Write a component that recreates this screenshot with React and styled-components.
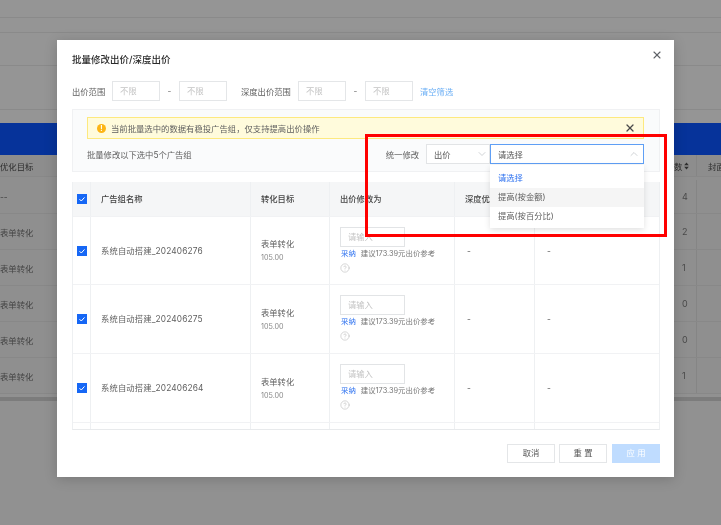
import React from 'react';
import styled, { createGlobalStyle } from 'styled-components';
import { ChevronDown, ChevronUp, X, CircleHelp } from 'lucide-react';

const GlobalStyle = createGlobalStyle`
  html, body {
    margin: 0;
    padding: 0;
    background: #919191;
    font-family: Inter, "Noto Sans CJK SC", sans-serif;
  }
  * {
    box-sizing: border-box;
  }
`;

// the reference is a soft, upscaled capture
const Page = styled.div`
  position: relative;
  width: 721px;
  height: 525px;
  overflow: hidden;
  background: #919191;
  filter: blur(0.3px);
`;

/* dimmed page behind the modal */
const BackTop = styled.div`
  height: 123px;
  background: #959595;
`;

const BackLine = styled.div`
  height: ${(p) => p.$h}px;
  border-bottom: 1px solid #8a8a8a;
`;

const BlueBand = styled.div`
  height: 32px;
  background: #06339a;
`;

const BackRow = styled.div`
  display: grid;
  grid-template-columns: 33px 1fr 24px 24px;
  align-items: center;
  height: ${(p) => p.$h}px;
  padding-top: ${(p) => p.$pt ?? 0}px;
  background: ${(p) => (p.$head ? '#8d8d8d' : '#8f8f8f')};
  border-bottom: 1px solid #888;
  font-size: 8.4px;
  color: ${(p) => (p.$head ? '#2e2e2e' : '#444')};
  white-space: nowrap;
`;

const BackNum = styled.span`
  grid-column: 3;
  display: flex;
  align-items: center;
  align-self: stretch;
  gap: 2px;
  padding-left: ${(p) => p.$pl}px;
  font-size: ${(p) => (p.$num ? 9 : 8.4)}px;
  color: ${(p) => (p.$num ? '#4a4a4a' : 'inherit')};
  border-right: 1px solid #858585;
`;

const BackCover = styled.span`
  padding-left: 11px;
`;

const ScrollBar = styled.div`
  height: 4px;
  margin-top: 3px;
  background: #7c7c7c;
`;

const Overlay = styled.div`
  position: absolute;
  inset: 0;
`;

const Modal = styled.div`
  position: absolute;
  left: 57px;
  top: 40px;
  width: 617px;
  height: 437px;
  background: #fff;
  box-shadow: 0 2px 12px rgba(0, 0, 0, 0.18);
  padding: 14px 14px 14px 15px;
  display: flex;
  flex-direction: column;
`;

const CloseBtn = styled.div`
  position: absolute;
  right: 11px;
  top: 9px;
  color: #5f6368;
  display: flex;
`;

const Title = styled.div`
  font-size: 9.5px;
  line-height: 12px;
  font-weight: 500;
  color: #2b2b2b;
  margin-bottom: 15px;
  white-space: nowrap;
`;

const FilterRow = styled.div`
  display: flex;
  align-items: center;
  height: 20px;
  font-size: 8.3px;
  color: #606060;
  margin-bottom: 8px;
`;

const FilterLabel = styled.span`
  margin-right: ${(p) => p.$gap}px;
  width: ${(p) => p.$w}px;
  white-space: nowrap;
`;

const SmallInput = styled.div`
  width: 48px;
  height: 20px;
  border: 1px solid #e4e6e8;
  font-size: 8.4px;
  line-height: 18px;
  padding-left: 7px;
  color: #c4c4c4;
`;

const Dash = styled.span`
  width: 19px;
  text-align: center;
  color: #777;
`;

const ClearLink = styled.span`
  margin-left: 7px;
  color: #6aaef5;
  white-space: nowrap;
`;

const Spacer = styled.div`
  width: ${(p) => p.$w}px;
`;

const Panel = styled.div`
  height: 63px;
  background: #fafbfc;
  border: 1px solid #f0f1f3;
  padding: 7px 15px 0 14px;
  margin-bottom: 10px;
`;

const Alert = styled.div`
  display: flex;
  align-items: center;
  height: 22px;
  background: #fffbdc;
  border: 1px solid #fde97f;
  padding: 0 7px 0 9px;
  font-size: 8.35px;
  color: #606060;
`;

const AlertIcon = styled.span`
  width: 9px;
  height: 9px;
  border-radius: 50%;
  background: #fdb515;
  color: #fff;
  font-size: 7px;
  font-weight: 700;
  line-height: 9px;
  text-align: center;
  margin-right: 5px;
`;

const AlertText = styled.span`
  flex: 1;
  white-space: nowrap;
`;

const AlertClose = styled.span`
  display: flex;
  color: #4a4a4a;
`;

const PanelRow = styled.div`
  display: flex;
  align-items: center;
  height: 20px;
  margin-top: 5px;
  font-size: 8.3px;
  color: #606060;
`;

const PanelText = styled.span`
  flex: 1;
  white-space: nowrap;
  margin-top: -1px;
`;

const SelectWrap = styled.div`
  position: relative;
  margin-left: ${(p) => p.$ml}px;
`;

const Select = styled.div`
  display: flex;
  align-items: center;
  justify-content: space-between;
  width: ${(p) => p.$w}px;
  height: 20px;
  padding: 0 ${(p) => (p.$open ? 3 : 1)}px 0 7px;
  background: #fff;
  border: 1px solid ${(p) => (p.$open ? '#5f9ff5' : '#e2e4e6')};
  font-size: 8.3px;
  color: #555;
  svg {
    color: #c0c4c8;
  }
`;

const Dropdown = styled.div`
  position: absolute;
  z-index: 2;
  left: 0;
  top: 21px;
  width: 154px;
  padding: 4px 0 2px;
  background: #fff;
  box-shadow: 0 2px 6px rgba(0, 0, 0, 0.12);
`;

const Option = styled.div`
  height: 19px;
  line-height: 19px;
  padding-left: 8px;
  white-space: nowrap;
  background: ${(p) => (p.$hover ? '#f5f5f5' : '#fff')};
  color: ${(p) => (p.$active ? '#2a6ff0' : '#606060')};
`;

const TableBox = styled.div`
  height: 248px;
  overflow: hidden;
  border-bottom: 1px solid #e8eaec;
  border-left: 1px solid #eef0f2;
  border-right: 1px solid #eef0f2;
`;

const Cols = styled.div`
  display: grid;
  grid-template-columns: 18px 160px 79px 125px 80px 1fr;
  height: ${(p) => p.$h}px;
  border-bottom: 1px solid #f1f2f4;
  background: ${(p) => (p.$head ? '#f5f6f7' : '#fff')};
`;

const Cell = styled.div`
  display: flex;
  flex-direction: column;
  justify-content: center;
  align-items: flex-start;
  min-width: 0;
  padding-left: ${(p) => p.$pl ?? 10}px;
  border-right: 1px solid #eef0f2;
  font-size: 8.3px;
  line-height: 12px;
  font-weight: ${(p) => (p.$head ? 500 : 400)};
  color: ${(p) => (p.$head ? '#444' : '#606060')};
  white-space: nowrap;
  &:last-child {
    border-right: none;
  }
`;

const BidCell = styled(Cell)`
  padding-bottom: 2px;
`;

const NameText = styled.span`
  letter-spacing: 0.15px;
`;

const CheckBox = styled.span`
  width: 10px;
  height: 10px;
  background: #1667f5;
  color: #fff;
  display: flex;
  align-items: center;
  justify-content: center;
`;

const Sub = styled.span`
  font-size: 7.2px;
  color: #888;
  line-height: 10px;
  margin-top: 3px;
`;

const BidInput = styled.div`
  width: 65px;
  height: 20px;
  border: 1px solid #e2e4e6;
  line-height: 18px;
  padding-left: 7px;
  color: #c4c4c4;
`;

const Tip = styled.div`
  margin-top: 1px;
  padding-left: 1px;
  font-size: 7.4px;
  line-height: 12px;
  color: #777;
`;

const Adopt = styled.span`
  color: #2a6ff0;
  margin-right: 5px;
`;

const HelpIcon = styled.div`
  display: flex;
  color: #b4b4b4;
  margin-top: 3px;
`;

const Footer = styled.div`
  display: flex;
  justify-content: flex-end;
  gap: 4px;
  margin-top: 14px;
`;

const FootBtn = styled.div`
  width: 48px;
  height: 19px;
  margin-left: ${(p) => p.$ml ?? 0}px;
  border: 1px solid ${(p) => (p.$primary ? '#bfdcff' : '#e4e6e8')};
  background: ${(p) => (p.$primary ? '#bfdcff' : '#fff')};
  color: ${(p) => (p.$primary ? '#fff' : '#555')};
  font-size: 8.3px;
  line-height: 17px;
  text-align: center;
`;

const RedBox = styled.div`
  position: absolute;
  z-index: 3;
  left: 365px;
  top: 134px;
  width: 302px;
  height: 103px;
  border: 3px solid #f00;
  pointer-events: none;
`;

const backRows = [
  { goal: '--', num: '4', h: 37, pt: 3 },
  { goal: '表单转化', num: '2', h: 36 },
  { goal: '表单转化', num: '1', h: 36 },
  { goal: '表单转化', num: '0', h: 36 },
  { goal: '表单转化', num: '0', h: 36 },
  { goal: '表单转化', num: '1', h: 36 },
];

const groups = [
  { name: '系统自动搭建_202406276', h: 68 },
  { name: '系统自动搭建_202406275', h: 69 },
  { name: '系统自动搭建_202406264', h: 69 },
];

function Check() {
  return (
    <CheckBox>
      <svg width="8" height="8" viewBox="0 0 8 8" fill="none">
        <path d="M1.5 4.2 3.3 6 6.5 2.4" stroke="currentColor" strokeWidth="1" />
      </svg>
    </CheckBox>
  );
}

function SortIcon() {
  return (
    <svg width="5" height="8" viewBox="0 0 5 8" fill="currentColor">
      <path d="M2.5 0.5 4.8 3.2H0.2Z" />
      <path d="M2.5 7.5 0.2 4.8H4.8Z" />
    </svg>
  );
}

export default function App() {
  return (
    <Page>
      <GlobalStyle />
      <BackTop>
        <BackLine $h={18} />
        <BackLine $h={15} />
        <BackLine $h={33} />
        <BackLine $h={44} />
      </BackTop>
      <BlueBand />
      <BackRow $h={22} $head>
        <span>优化目标</span>
        <BackNum $pl={1}>
          数 <SortIcon />
        </BackNum>
        <BackCover>封面</BackCover>
      </BackRow>
      {backRows.map((r, i) => (
        <BackRow key={i} $h={r.h} $pt={r.pt}>
          <span>{r.goal}</span>
          <BackNum $pl={9} $num>{r.num}</BackNum>
        </BackRow>
      ))}
      <ScrollBar />

      <Overlay>
        <Modal>
          <CloseBtn>
            <X size={12} strokeWidth={2.2} />
          </CloseBtn>
          <Title>批量修改出价/深度出价</Title>
          <FilterRow>
            <FilterLabel $w={33} $gap={7}>出价范围</FilterLabel>
            <SmallInput>不限</SmallInput>
            <Dash>-</Dash>
            <SmallInput>不限</SmallInput>
            <Spacer $w={14} />
            <FilterLabel $w={49} $gap={8}>深度出价范围</FilterLabel>
            <SmallInput>不限</SmallInput>
            <Dash>-</Dash>
            <SmallInput>不限</SmallInput>
            <ClearLink>清空筛选</ClearLink>
          </FilterRow>

          <Panel>
            <Alert>
              <AlertIcon>!</AlertIcon>
              <AlertText>当前批量选中的数据有稳投广告组，仅支持提高出价操作</AlertText>
              <AlertClose>
                <X size={12} strokeWidth={2.6} />
              </AlertClose>
            </Alert>
            <PanelRow>
              <PanelText>批量修改以下选中5个广告组</PanelText>
              <span>统一修改</span>
              <SelectWrap $ml={7}>
                <Select $w={64}>
                  出价
                  <ChevronDown size={12} strokeWidth={1.5} />
                </Select>
              </SelectWrap>
              <SelectWrap $ml={0}>
                <Select $w={154} $open>
                  请选择
                  <ChevronUp size={12} strokeWidth={1.5} />
                </Select>
                <Dropdown>
                  <Option $active>请选择</Option>
                  <Option $hover>提高(按金额)</Option>
                  <Option>提高(按百分比)</Option>
                </Dropdown>
              </SelectWrap>
            </PanelRow>
          </Panel>

          <TableBox>
            <Cols $h={35} $head>
              <Cell $pl={4}><Check /></Cell>
              <Cell $head>广告组名称</Cell>
              <Cell $head>转化目标</Cell>
              <Cell $head>出价修改为</Cell>
              <Cell $head>深度优</Cell>
              <Cell $head />
            </Cols>
            {groups.map((g) => (
              <Cols key={g.name} $h={g.h}>
                <Cell $pl={4}><Check /></Cell>
                <Cell><NameText>{g.name}</NameText></Cell>
                <Cell>
                  表单转化
                  <Sub>105.00</Sub>
                </Cell>
                <BidCell>
                  <BidInput>请输入</BidInput>
                  <Tip>
                    <Adopt>采纳</Adopt>建议173.39元出价参考
                  </Tip>
                  <HelpIcon>
                    <CircleHelp size={10} strokeWidth={1.3} />
                  </HelpIcon>
                </BidCell>
                <Cell $pl={12}>-</Cell>
                <Cell $pl={12}>-</Cell>
              </Cols>
            ))}
            <Cols $h={8}>
              <Cell /><Cell /><Cell /><Cell /><Cell /><Cell />
            </Cols>
          </TableBox>

          <Footer>
            <FootBtn>取消</FootBtn>
            <FootBtn>重 置</FootBtn>
            <FootBtn $primary $ml={1}>应 用</FootBtn>
          </Footer>
        </Modal>
        <RedBox />
      </Overlay>
    </Page>
  );
}
